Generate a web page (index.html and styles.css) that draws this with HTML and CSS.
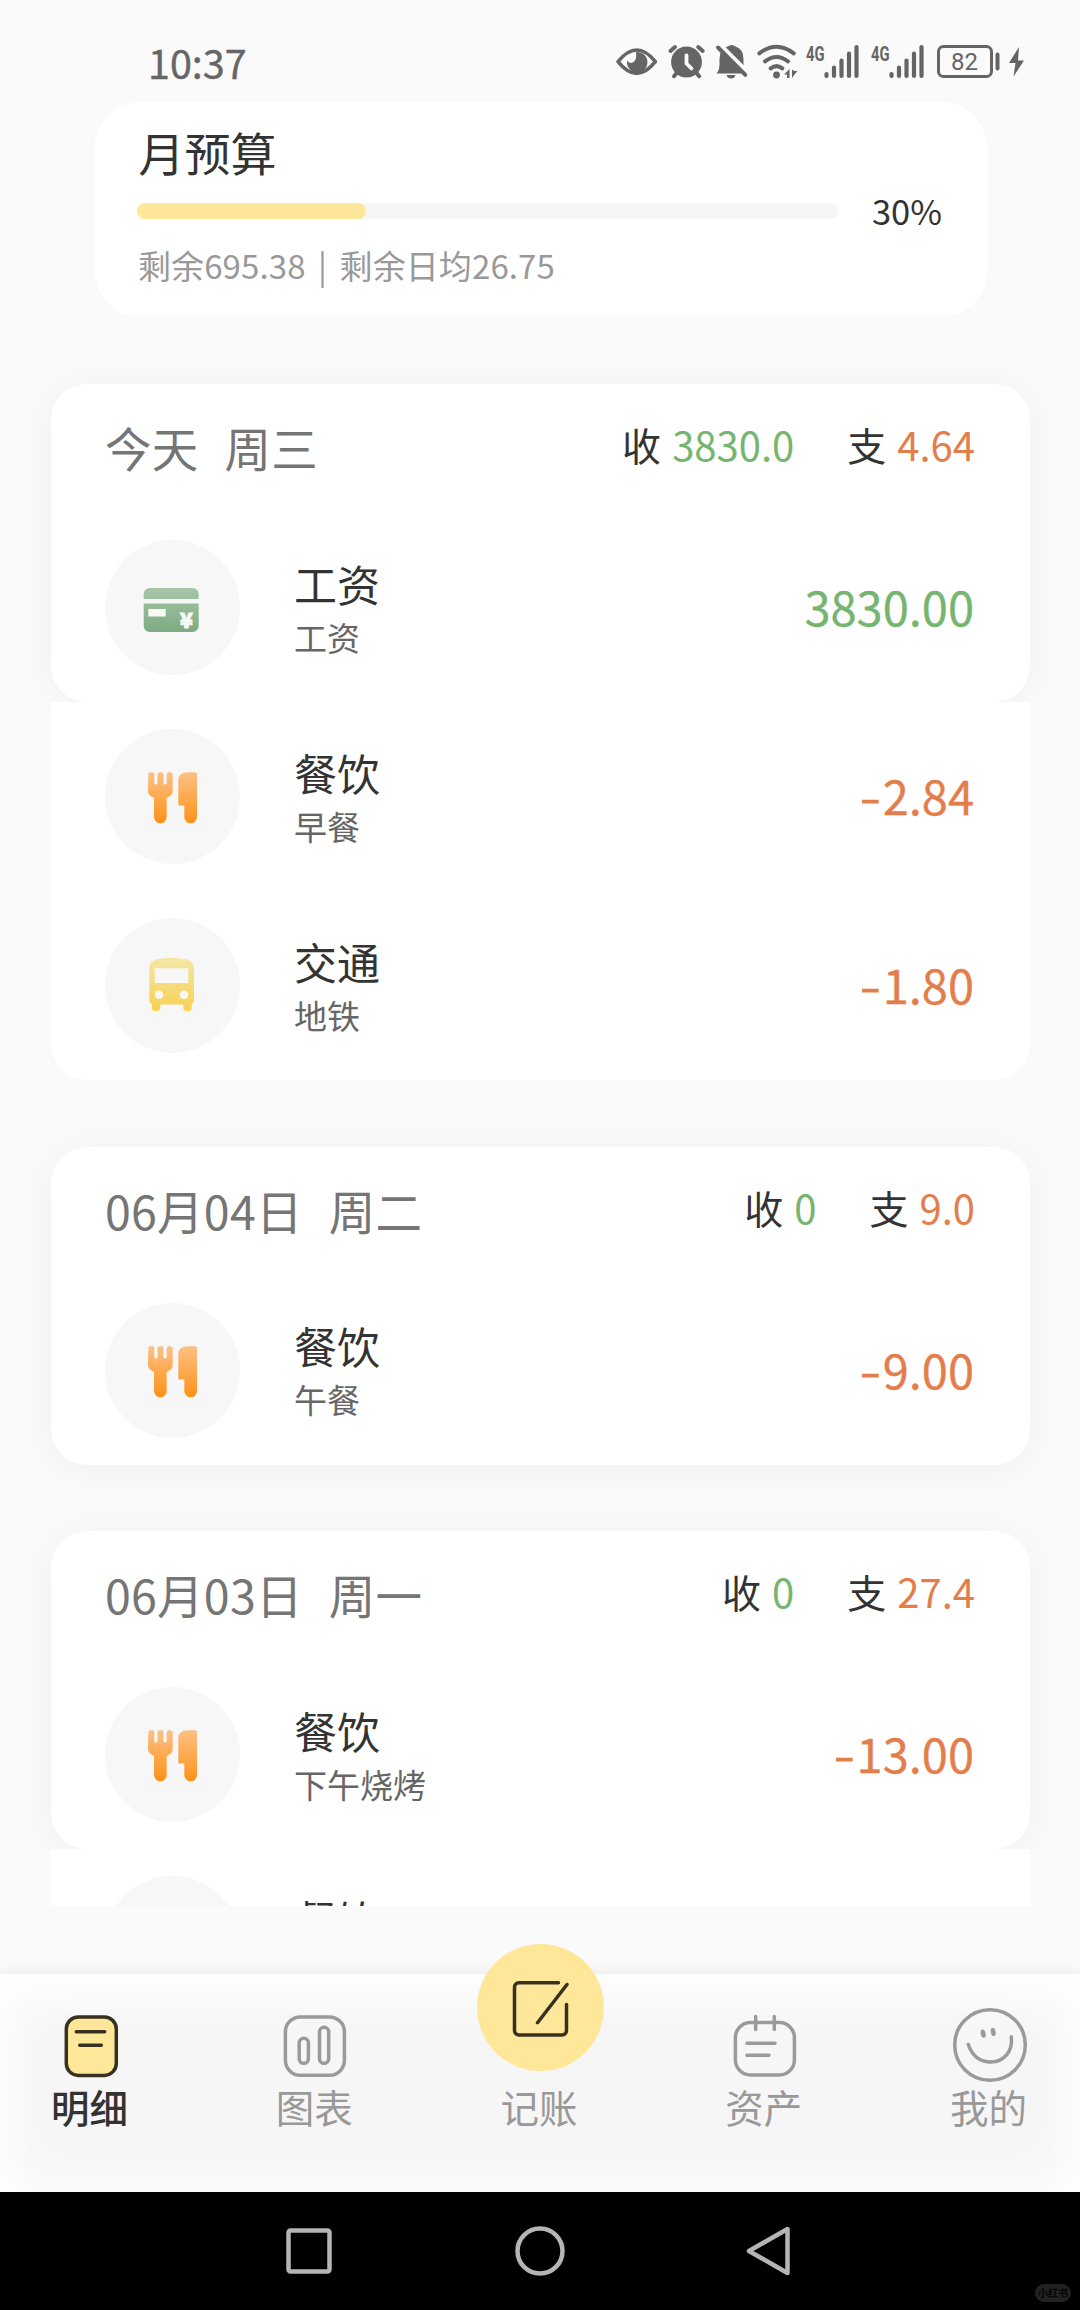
FILE: index.html
```html
<!DOCTYPE html>
<html lang="zh-CN">
<head>
<meta charset="utf-8">
<title>明细</title>
<link rel="stylesheet" href="styles.css">
</head>
<body>
<svg class="defs" width="0" height="0" aria-hidden="true">
  <defs>
    <linearGradient id="g-green" gradientUnits="userSpaceOnUse" x1="0" y1="48" x2="0" y2="92"><stop offset="0" stop-color="#a8c5aa"/><stop offset="1" stop-color="#7dab80"/></linearGradient>
    <linearGradient id="g-orange" gradientUnits="userSpaceOnUse" x1="0" y1="43" x2="0" y2="94"><stop offset="0" stop-color="#fcc186"/><stop offset="1" stop-color="#ff9118"/></linearGradient>
    <linearGradient id="g-yellow" gradientUnits="userSpaceOnUse" x1="0" y1="40" x2="0" y2="93"><stop offset="0" stop-color="#f4e6a6"/><stop offset="1" stop-color="#f8d152"/></linearGradient>
    <symbol id="i-wage" viewBox="0 0 135 135">
      <path fill="url(#g-green)" d="M38.7 59v-5a6 6 0 0 1 6-6h43a6 6 0 0 1 6 6v5zM38.7 63.5h55V86a6 6 0 0 1-6 6h-43a6 6 0 0 1-6-6z"/>
      <path fill="#f7f9f7" d="M43.3 69h17.4v7.5H43.3z"/>
      <text class="yen" x="81.3" y="87.5" text-anchor="middle">¥</text>
    </symbol>
    <symbol id="i-food" viewBox="0 0 135 135">
      <path fill="url(#g-orange)" d="M43.3 45.5a2 2 0 0 1 2-2.3h2a2 2 0 0 1 2 2V54a1.6 1.6 0 0 0 3.2 0v-8.500a2.300 2.300 0 0 1 2.300-2.300h1.400a2.300 2.300 0 0 1 2.300 2.300V54a1.600 1.600 0 0 0 3.200 0v-8.500a2.300 2.300 0 0 1 2.300-2.300h1.400a2.300 2.300 0 0 1 2.300 2.300V62q0 3.500-3 5.300l-3 1.700V88a6.300 6.300 0 0 1-12.700 0V69l-3-1.700q-3-1.800-3-5.300z"/>
      <path fill="url(#g-orange)" d="M73.300 51q0-7.800 10-7.800H90a2 2 0 0 1 2 2V88a6.300 6.300 0 0 1-12.700 0V76.500h-4.500a1.500 1.500 0 0 1-1.500-1.500z"/>
    </symbol>
    <symbol id="i-bus" viewBox="0 0 135 135">
      <path fill="url(#g-yellow)" fill-rule="evenodd" d="M44.300 51q0-8 8-9.700 14.300-3 28.700 0 8 1.700 8 9.700v31a6 6 0 0 1-2.300 4.500V90a3 3 0 0 1-3 3h-2.400a3 3 0 0 1-3-3v-3.500H55.300V90a3 3 0 0 1-3 3h-2.400a3 3 0 0 1-3-3v-3.500A6 6 0 0 1 44.300 82zM49.700 50.200V65h33.600V50.200zM49.700 76.800a4.300 4.300 0 1 0 8.600 0 4.300 4.300 0 1 0-8.600 0zM74.700 76.800a4.300 4.300 0 1 0 8.600 0 4.300 4.300 0 1 0-8.600 0z"/>
    </symbol>
  </defs>
</svg>

<div class="phone">
  <header class="status">
    <time class="clock">10:37</time>
    <div class="status-icons">
      <svg width="46" height="36" viewBox="616 44 46 36"><path class="line" stroke-width="3.600" d="M618 61.700q18.700-23.400 37.400 0-18.700 23.400-37.400 0z"/><path class="solid" d="M636 52.200a10.200 10.200 0 1 1-8.800 8.300q2 3.500 5.500 2 4.500-2.500 3.300-10.300z"/></svg>
      <svg width="48" height="36" viewBox="662 44 48 36"><circle class="solid" cx="686.500" cy="62" r="15.400"/><path class="line" stroke-width="4" d="M670.500 51l4.500-4M698.200 47l4.500 4M677 72.500l-3 3.700M696.200 72.500l3 3.700"/><path class="cut" stroke-width="3.800" d="M686.500 55.500v8l5 5"/></svg>
      <svg width="42" height="36" viewBox="710 44 42 36"><path class="solid" d="M716.500 73.500q3-3.500 3-9V59q0-10 8-12.500 4-3 8 0 8 2.500 8 12.500v6q0 5 3.500 8.500zM726.500 75h9q-1 3.500-4.500 3.500t-4.500-3.500z"/><path class="cut" stroke-width="4" d="M721 45.500l28 28"/><path class="line" stroke-width="4" d="M718 47.500l27.300 27.300"/></svg>
      <svg width="50" height="36" viewBox="752 44 50 36"><path class="line" stroke-width="4" d="M759.300 53.300q17.200-13 34.400 0M765 61.300q11.500-8.600 23 0M770.700 68.300q5.800-4.400 11.600 0"/><circle class="solid" cx="776.500" cy="75" r="3.400"/><path class="solid" d="M784 74.500l5.500-5.500v9h-2.500v-3.500zM792 69.500v8.500l2.500-3.500 3-3.500h-3z"/></svg>
      <svg width="65" height="36" viewBox="802 44 65 36"><text class="net" x="806" y="60.500" textLength="18.500" lengthAdjust="spacingAndGlyphs">4G</text><path class="line" stroke-width="4.200" d="M826.500 74v2M834 67.500V76M841.500 60.500V76M849 53.500V76M856.500 47V76"/></svg>
      <svg width="65" height="36" viewBox="802 44 65 36"><text class="net" x="806" y="60.500" textLength="18.500" lengthAdjust="spacingAndGlyphs">4G</text><path class="line" stroke-width="4.200" d="M826.500 74v2M834 67.500V76M841.500 60.500V76M849 53.500V76M856.500 47V76"/></svg>
      <svg width="74" height="36" viewBox="932 44 74 36"><rect class="line" stroke-width="3" x="938.500" y="46.500" width="53" height="30" rx="5"/><text class="level" x="964.500" y="70.300" text-anchor="middle">82</text><path class="line" stroke-width="4" d="M997.500 54.500v14"/></svg>
      <svg width="24" height="36" viewBox="1006 44 24 36"><path class="solid" d="M1019 47l-10 16h6.500L1013.500 76.500 1024 60.500h-6z"/></svg>
    </div>
  </header>

  <main class="feed">
    <section class="budget">
      <h2 class="budget-title">月预算</h2>
      <div class="budget-meter">
        <div class="track"><div class="fill"></div></div>
        <span class="percent">30%</span>
      </div>
      <p class="budget-note">剩余695.38<span class="bar"> | </span>剩余日均26.75</p>
    </section>

    <section class="day">
      <div class="panel">
        <div class="day-head">
          <h3 class="date"><span>今天</span><span>周三</span></h3>
          <div class="sums"><span class="sum">收 <b class="num in">3830.0</b></span><span class="sum">支 <b class="num out">4.64</b></span></div>
        </div>
        <div class="entry">
          <svg class="badge"><use href="#i-wage"/></svg>
          <div class="what"><div class="name">工资</div><div class="memo">工资</div></div>
          <div class="amount in">3830.00</div>
        </div>
      </div>
      <div class="rest">
        <div class="entry">
          <svg class="badge"><use href="#i-food"/></svg>
          <div class="what"><div class="name">餐饮</div><div class="memo">早餐</div></div>
          <div class="amount out"><span class="sign">-</span>2.84</div>
        </div>
        <div class="entry">
          <svg class="badge"><use href="#i-bus"/></svg>
          <div class="what"><div class="name">交通</div><div class="memo">地铁</div></div>
          <div class="amount out"><span class="sign">-</span>1.80</div>
        </div>
      </div>
    </section>

    <section class="day">
      <div class="panel">
        <div class="day-head">
          <h3 class="date"><span>06月04日</span><span>周二</span></h3>
          <div class="sums"><span class="sum">收 <b class="num in">0</b></span><span class="sum">支 <b class="num out">9.0</b></span></div>
        </div>
        <div class="entry">
          <svg class="badge"><use href="#i-food"/></svg>
          <div class="what"><div class="name">餐饮</div><div class="memo">午餐</div></div>
          <div class="amount out"><span class="sign">-</span>9.00</div>
        </div>
      </div>
    </section>

    <section class="day">
      <div class="panel">
        <div class="day-head">
          <h3 class="date"><span>06月03日</span><span>周一</span></h3>
          <div class="sums"><span class="sum">收 <b class="num in">0</b></span><span class="sum">支 <b class="num out">27.4</b></span></div>
        </div>
        <div class="entry">
          <svg class="badge"><use href="#i-food"/></svg>
          <div class="what"><div class="name">餐饮</div><div class="memo">下午烧烤</div></div>
          <div class="amount out"><span class="sign">-</span>13.00</div>
        </div>
      </div>
      <div class="rest">
        <div class="entry">
          <svg class="badge"></svg>
          <div class="what"><div class="name">餐饮</div></div>
        </div>
      </div>
    </section>
  </main>

  <nav class="tabs">
    <a class="tab active">
      <span class="slot"><svg width="80" height="80" viewBox="0 0 80 80"><rect x="15.300" y="11" width="50" height="58.400" rx="12" fill="#ffe799"/><path d="M25.300 25.700h28.400M28.700 39.300h21.600"/></svg></span>
      <span class="label">明细</span>
    </a>
    <a class="tab">
      <span class="slot"><svg width="80" height="80" viewBox="0 0 80 80"><rect x="10.400" y="10.900" width="59" height="58.400" rx="15"/><rect x="24.200" y="32.300" width="9.200" height="25" rx="4.600"/><rect x="44.500" y="21.300" width="9.200" height="36" rx="4.600"/></svg></span>
      <span class="label">图表</span>
    </a>
    <a class="tab">
      <span class="slot"><svg class="add" width="127" height="127" viewBox="0 0 127 127"><circle cx="63.500" cy="63.500" r="63.500" fill="#ffe799" stroke="none"/><path d="M81.500 38.700H42a4.500 4.500 0 0 0-4.500 4.500V86.500A4.500 4.500 0 0 0 42 91h43a4.500 4.500 0 0 0 4.500-4.500V60.500M90 40.500L60.500 78.700"/></svg></span>
      <span class="label">记账</span>
    </a>
    <a class="tab">
      <span class="slot"><svg width="80" height="80" viewBox="0 0 80 80"><rect x="10.400" y="16.500" width="59" height="52.500" rx="15"/><path d="M30.700 10.500v13M49.300 10.500v13M22 37.300h28M22 49.300h22"/></svg></span>
      <span class="label">资产</span>
    </a>
    <a class="tab">
      <span class="slot"><svg width="80" height="80" viewBox="0 0 80 80"><circle cx="40" cy="39" r="35.300"/><path d="M18.300 38.500C22 49.500 30 56 41 56c13.500 0 22-11 20.300-25.300"/><g class="eyes"><ellipse cx="33.200" cy="27.700" rx="2.400" ry="4.200" transform="rotate(-12 33.200 27.700)"/><ellipse cx="43.200" cy="26" rx="2.400" ry="4.200" transform="rotate(-12 43.200 26)"/></g></svg></span>
      <span class="label">我的</span>
    </a>
  </nav>

  <footer class="system">
    <svg width="60" height="60" viewBox="0 0 60 60"><rect x="9.500" y="9.500" width="41" height="41" rx="2"/></svg>
    <svg width="60" height="60" viewBox="0 0 60 60"><circle cx="30" cy="30" r="22.500"/></svg>
    <svg width="60" height="60" viewBox="0 0 60 60"><path d="M46.500 8v44L8 30z"/></svg>
    <span class="mark">小红书</span>
  </footer>
</div>
</body>
</html>
```
FILE: styles.css
```css
* { box-sizing: border-box; margin: 0; padding: 0; }

body {
  width: 1080px;
  background: #fafafa;
  color: #333;
  font-family: "Noto Sans CJK SC", "Noto Sans", sans-serif;
}

h2, h3, b { font-weight: 400; }
svg { display: block; flex: none; }
.defs { width: 0; height: 0; position: absolute; }

.phone {
  display: flex;
  flex-direction: column;
  width: 1080px;
  height: 2310px;
  overflow: hidden;
}

/* status bar */
.status {
  display: flex;
  flex: none;
  justify-content: space-between;
  align-items: flex-start;
  height: 101.5px;
  padding: 44px 50px 0 148px;
}
.clock { font-size: 39.5px; line-height: 35px; color: #666; -webkit-text-stroke: .4px #666; }
.status-icons { display: flex; }
.status-icons svg { overflow: visible; }
.line { fill: none; stroke: #656565; stroke-linecap: round; stroke-linejoin: round; }
.solid { fill: #656565; }
.cut { fill: none; stroke: #fafafa; stroke-linecap: round; stroke-linejoin: round; }
.net { font: 700 20px Roboto, sans-serif; fill: #656565; }
.level { font: 400 24px Roboto, sans-serif; fill: #656565; }

/* scrolling feed */
.feed {
  display: flex;
  flex-direction: column;
  flex: none;
  height: 1804.5px;
  overflow: hidden;
}

.budget {
  flex: none;
  width: 892px;
  height: 215px;
  margin: 0 0 67.5px 95px;
  padding: 21px 45px 0 42px;
  border-radius: 46px;
  background: #fff;
}
.budget-title { padding-left: 1.5px; font-size: 46px; line-height: 56px; }
.budget-meter { display: flex; align-items: center; justify-content: space-between; height: 64px; }
.track { width: 701px; height: 16px; border-radius: 8px; background: #f6f6f6; }
.fill { width: 228.5px; height: 16px; border-radius: 8px; background: #ffe799; }
.percent { margin-top: -2px; font-size: 34.5px; line-height: 40px; }
.budget-note { padding-left: 1px; font-size: 33px; line-height: 45px; letter-spacing: .1px; color: #999; }
.bar { margin: 0 5px; }

.day { flex: none; width: 979px; margin: 0 0 66.5px 51px; }
.panel {
  border-radius: 36px;
  background: #fff;
  box-shadow: 0 3px 40px rgba(0, 0, 0, .045);
}
.rest { position: relative; border-radius: 0 0 36px 36px; background: #fff; }

.day-head {
  display: flex;
  justify-content: space-between;
  height: 129px;
  padding: 0 55px 0 54px;
}
.date { display: flex; gap: 26px; padding-top: 33px; font-size: 46.5px; line-height: 60px; letter-spacing: .25px; color: #757575; }
.sums { display: flex; gap: 53px; padding-top: 30px; }
.sum { display: flex; gap: 11px; font-size: 39px; line-height: 60px; }
.num { font-size: 40px; }
.in { color: #76b56f; }
.out { color: #e37e4c; }

.entry {
  display: flex;
  align-items: center;
  height: 189px;
  padding: 0 56px 0 54px;
}
.badge { width: 135px; height: 135px; border-radius: 50%; background: #f7f7f7; }
.yen { font: 900 21px "Noto Sans CJK SC", sans-serif; fill: #f7f9f7; stroke: #f7f9f7; stroke-width: 1; }
.what { flex: 1; height: 108px; margin: 0 0 0 54px; }
.name { font-size: 43px; line-height: 58px; }
.memo { font-size: 33px; line-height: 50px; color: #666; }
.amount { margin-top: -3px; font-size: 47px; line-height: 60px; -webkit-text-stroke: .3px currentColor; }
.sign { display: inline-block; margin-right: 4px; transform: scaleX(1.35); }

/* tab bar */
.tabs {
  display: flex;
  flex: none;
  justify-content: space-between;
  height: 218px;
  margin-top: 68px;
  padding: 32px 35.5px 0;
  background: #f6f6f6;
  box-shadow: 0 -2px 12px rgba(0, 0, 0, .06), inset 0 24px 60px -8px #fff, inset 0 0 60px #fff;
}
.tab { display: flex; flex-direction: column; align-items: center; width: 110px; color: #999; }
.slot { display: flex; justify-content: center; width: 80px; height: 80px; }
.slot svg { fill: none; stroke: #999b99; stroke-width: 3.5; stroke-linecap: round; stroke-linejoin: round; }
.active .slot svg, .slot .add { stroke: #37321f; }
.slot .add { margin-top: -62px; }
.eyes { fill: #999b99; stroke: none; }
.label { margin: -2px 2px 0 0; font-size: 38.5px; line-height: 44px; }
.active { color: #333; }
.active .label { font-weight: 500; }

/* system navigation */
.system {
  position: relative;
  display: flex;
  flex: none;
  justify-content: center;
  gap: 171px;
  height: 118px;
  padding-top: 29px;
  background: #000;
}
.system svg { fill: none; stroke: #b5b5b5; stroke-width: 4.5; stroke-linejoin: round; }
.mark {
  position: absolute;
  right: 9px;
  bottom: 8px;
  width: 36px;
  border-radius: 9px;
  background: #222;
  color: #050505;
  font-size: 10px;
  font-weight: 700;
  line-height: 18px;
  text-align: center;
}
```
